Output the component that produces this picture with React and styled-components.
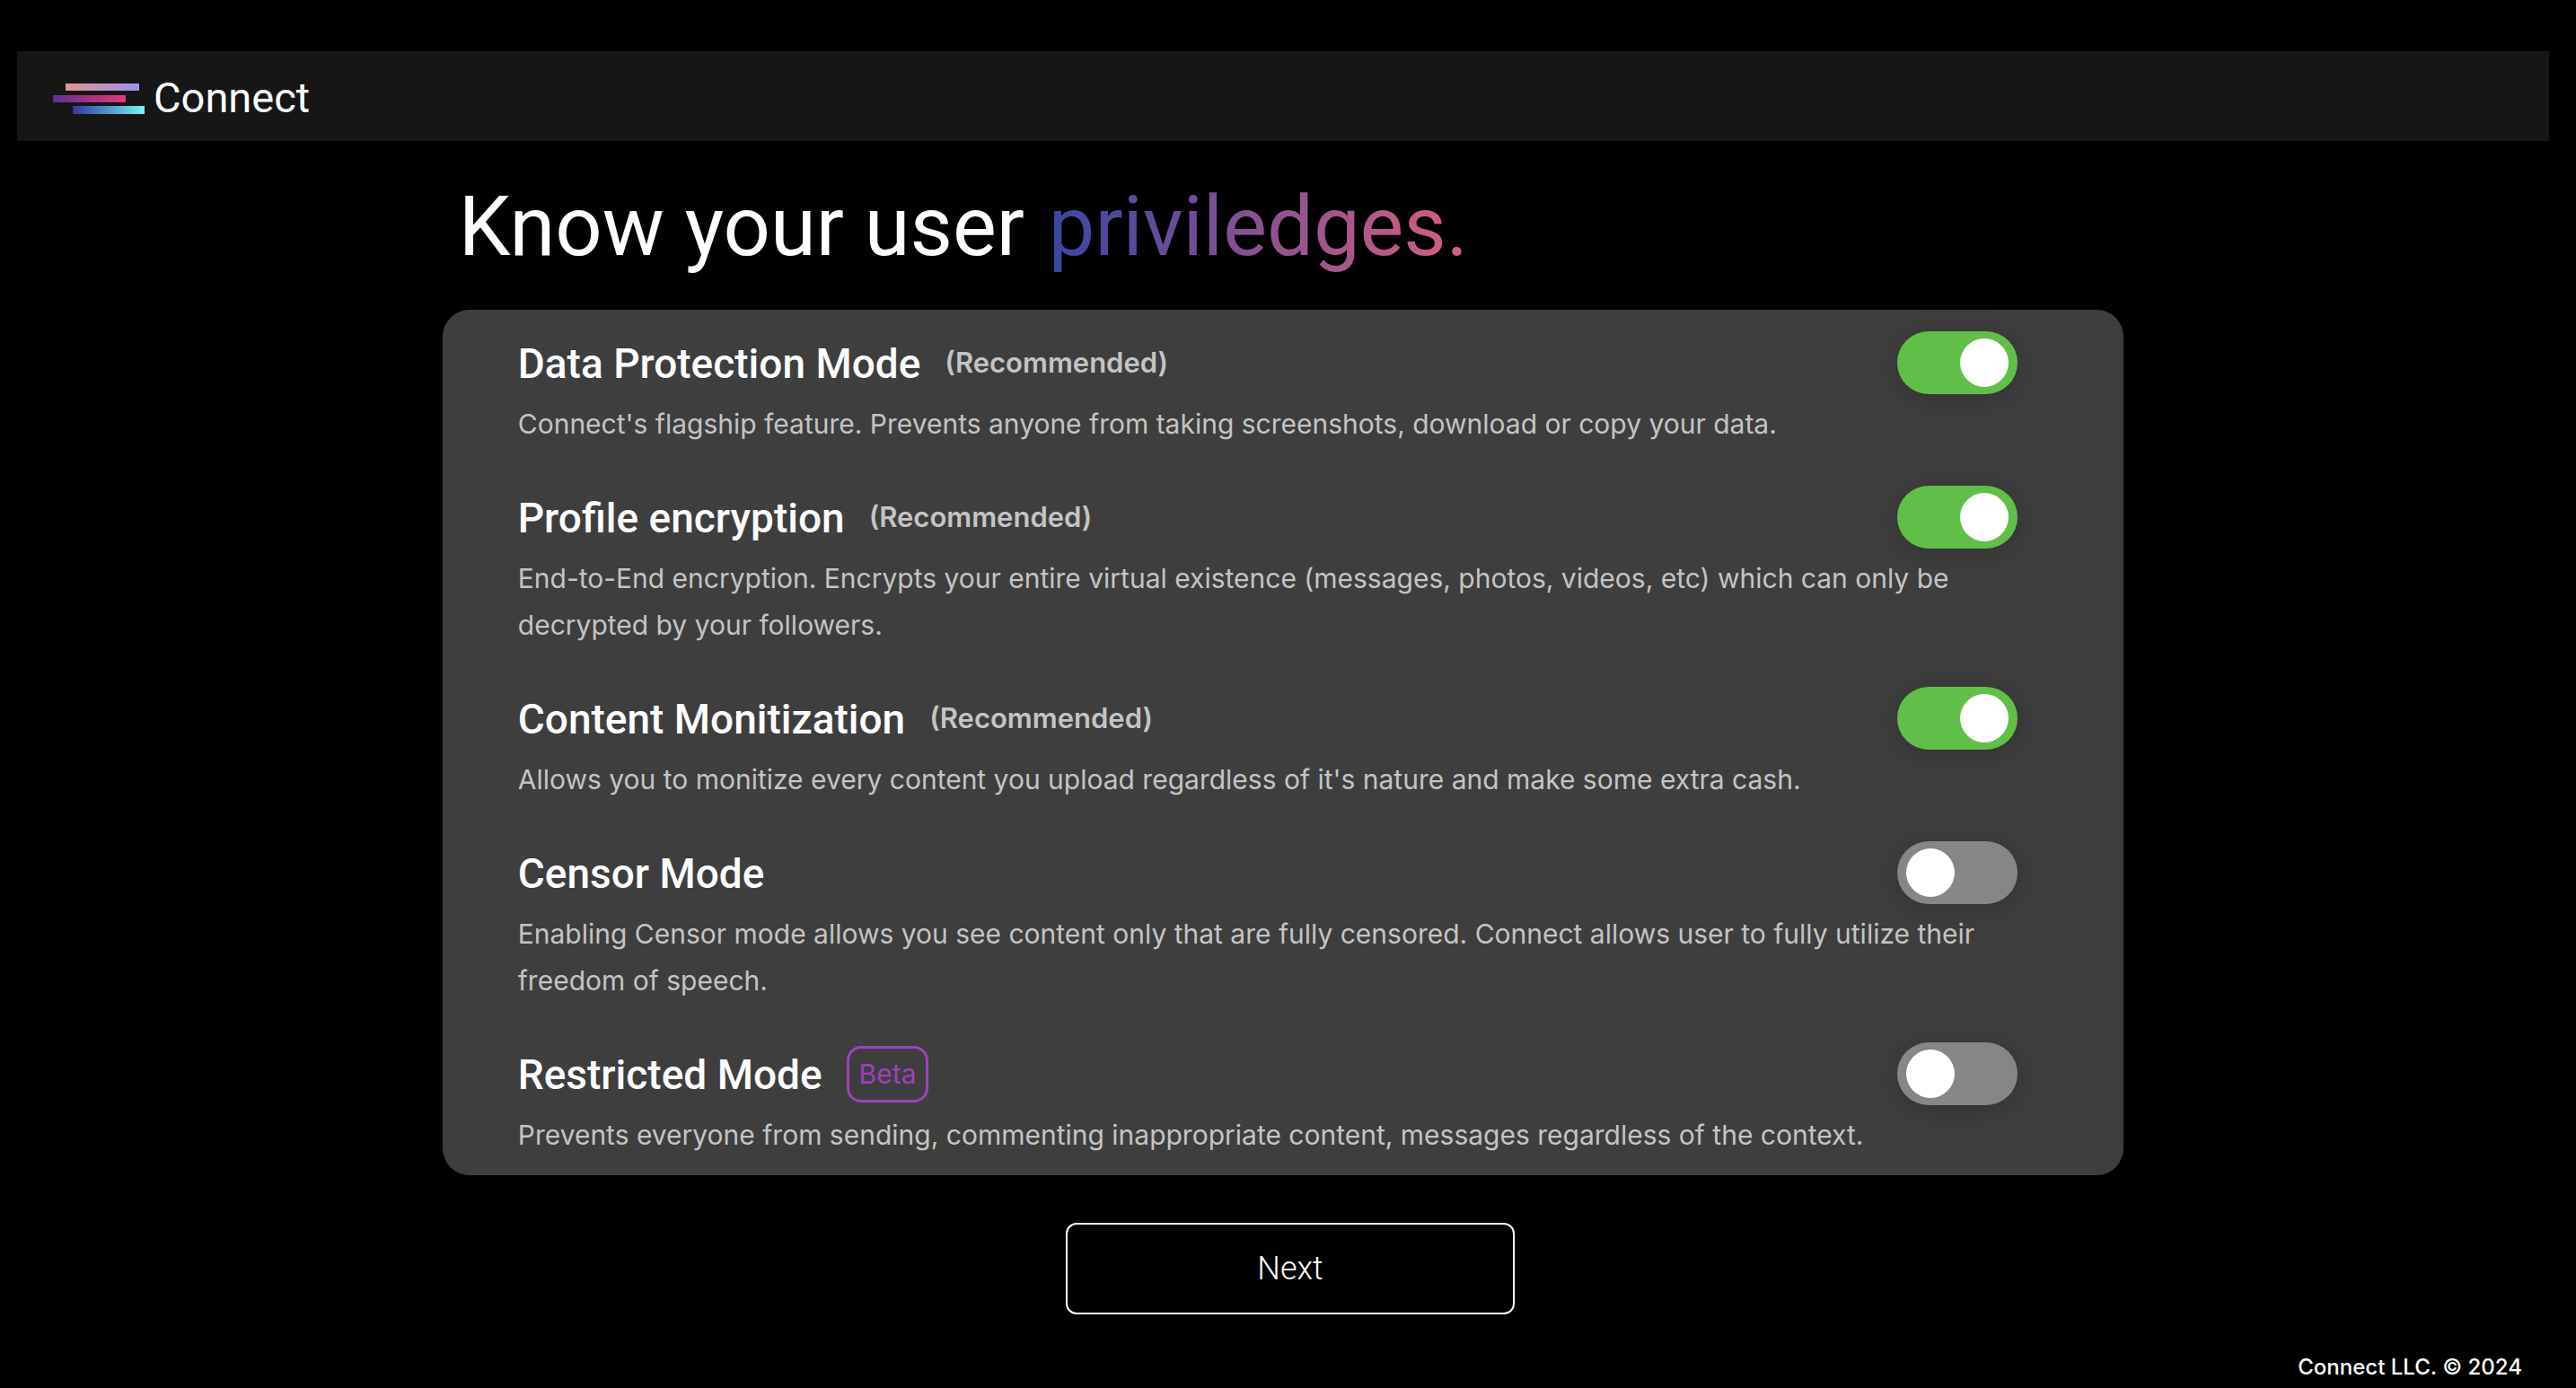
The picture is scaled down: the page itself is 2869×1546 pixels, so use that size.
import React, { useState } from 'react';
import styled, { createGlobalStyle } from 'styled-components';

const DISPLAY_FONT = 'Roboto, "Liberation Sans", sans-serif';
const TEXT_FONT = 'Inter, "Liberation Sans", sans-serif';

const GlobalStyle = createGlobalStyle`
  *, *::before, *::after { box-sizing: border-box; }
  body {
    margin: 0;
    background: #000;
    color: #fff;
    font-family: ${TEXT_FONT};
    -webkit-font-smoothing: antialiased;
  }
`;

const Page = styled.div`
  display: flex;
  flex-direction: column;
  min-height: 100vh;
  padding: 57px 30px 0 19px;
`;

const Header = styled.header`
  display: flex;
  align-items: center;
  height: 100px;
  padding: 0 40px;
  background: #161616;
`;

const Brand = styled.a`
  display: flex;
  align-items: center;
  gap: 10px;
  color: #fff;
  text-decoration: none;
`;

const BrandName = styled.span`
  padding-top: 4px;
  font-family: ${DISPLAY_FONT};
  font-size: 47px;
  line-height: 60px;
`;

const Logo = styled.svg`
  display: block;
  width: 102px;
  height: 40px;
`;

const Main = styled.main`
  display: flex;
  flex-direction: column;
  width: 66.4%;
  margin: 0 auto;
`;

const Title = styled.h1`
  margin: 0;
  padding: 34px 18px 30px;
  font-family: ${DISPLAY_FONT};
  font-size: 92px;
  font-weight: 400;
  line-height: 124px;
`;

const Highlight = styled.span`
  margin-left: 4px;
  background: linear-gradient(90deg, #3a45a3, #d75f80);
  background-clip: text;
  -webkit-background-clip: text;
  color: transparent;
`;

const Card = styled.section`
  display: flex;
  flex-direction: column;
  gap: 43px;
  padding: 24px 118px 19px 84px;
  border-radius: 30px;
  background: #3e3e3e;
`;

const Setting = styled.div`
  display: flex;
  flex-direction: column;
  gap: 7px;
`;

const SettingHead = styled.div`
  display: flex;
  align-items: center;
  gap: 27px;
  height: 70px;
`;

const SettingName = styled.label`
  padding-top: 2px;
  font-family: ${DISPLAY_FONT};
  font-size: 46px;
  font-weight: 500;
  line-height: 60px;
`;

const Recommended = styled.span`
  color: #c4c4c4;
  font-size: 31px;
  font-weight: 600;
  line-height: 40px;
`;

const Beta = styled.span`
  padding: 8px 11px;
  border: 3px solid #a040bf;
  border-radius: 16px;
  color: #a040bf;
  font-size: 30px;
  line-height: 41px;
`;

const Description = styled.p`
  margin: 0;
  color: #c4c4c4;
  font-size: 30px;
  line-height: 52px;
`;

const Toggle = styled.input`
  appearance: none;
  flex: none;
  display: flex;
  align-items: center;
  width: 134px;
  height: 70px;
  margin: 0 0 0 auto;
  padding: 0 10px;
  border-radius: 35px;
  background: #868686;
  box-shadow: 0 4px 30px rgba(0, 0, 0, 0.2);
  cursor: pointer;

  &::before {
    content: "";
    width: 54px;
    height: 54px;
    border-radius: 50%;
    background: #fff;
  }

  &:checked {
    justify-content: flex-end;
    background: #61bf49;
  }
`;

const Actions = styled.div`
  display: flex;
  justify-content: center;
  padding: 53px 0 0 16px;
`;

const Next = styled.button`
  width: 500px;
  height: 102px;
  border: 2px solid #fff;
  border-radius: 12px;
  background: #000;
  color: #fff;
  font-family: ${DISPLAY_FONT};
  font-size: 36px;
  font-weight: 300;
  cursor: pointer;
`;

const Footer = styled.footer`
  margin-top: auto;
  padding: 0 30px 7px;
  font-size: 24px;
  font-weight: 500;
  line-height: 32px;
  text-align: right;
`;

const SETTINGS = [
  {
    id: 'data-protection',
    name: 'Data Protection Mode',
    recommended: true,
    text: "Connect's flagship feature. Prevents anyone from taking screenshots, download or copy your data.",
  },
  {
    id: 'profile-encryption',
    name: 'Profile encryption',
    recommended: true,
    text: 'End-to-End encryption. Encrypts your entire virtual existence (messages, photos, videos, etc) which can only be decrypted by your followers.',
  },
  {
    id: 'content-monitization',
    name: 'Content Monitization',
    recommended: true,
    text: "Allows you to monitize every content you upload regardless of it's nature and make some extra cash.",
  },
  {
    id: 'censor-mode',
    name: 'Censor Mode',
    text: 'Enabling Censor mode allows you see content only that are fully censored. Connect allows user to fully utilize their freedom of speech.',
  },
  {
    id: 'restricted-mode',
    name: 'Restricted Mode',
    beta: true,
    text: 'Prevents everyone from sending, commenting inappropriate content, messages regardless of the context.',
  },
];

function ConnectLogo() {
  return (
    <Logo viewBox="0 0 102 40" aria-hidden="true">
      <defs>
        <linearGradient id="bar-top">
          <stop offset="0" stopColor="#e09490" />
          <stop offset="1" stopColor="#a091f5" />
        </linearGradient>
        <linearGradient id="bar-middle">
          <stop offset="0" stopColor="#63308c" />
          <stop offset="1" stopColor="#e03a78" />
        </linearGradient>
        <linearGradient id="bar-bottom">
          <stop offset="0" stopColor="#30389a" />
          <stop offset="1" stopColor="#74f5fb" />
        </linearGradient>
      </defs>
      <rect x="14" y="6" width="82" height="8" fill="url(#bar-top)" />
      <rect x="0" y="19" width="81" height="8" fill="url(#bar-middle)" />
      <rect x="22" y="31" width="80" height="9" fill="url(#bar-bottom)" />
    </Logo>
  );
}

function SettingRow({ id, name, recommended, beta, text, checked, onToggle }) {
  return (
    <Setting>
      <SettingHead>
        <SettingName htmlFor={id}>{name}</SettingName>
        {recommended && <Recommended>(Recommended)</Recommended>}
        {beta && <Beta>Beta</Beta>}
        <Toggle id={id} type="checkbox" checked={checked} onChange={onToggle} />
      </SettingHead>
      <Description>{text}</Description>
    </Setting>
  );
}

export default function App() {
  const [enabled, setEnabled] = useState(() =>
    Object.fromEntries(SETTINGS.map((s) => [s.id, Boolean(s.recommended)]))
  );
  const toggle = (id) => setEnabled((prev) => ({ ...prev, [id]: !prev[id] }));

  return (
    <>
      <GlobalStyle />
      <Page>
        <Header>
          <Brand href="#">
            <ConnectLogo />
            <BrandName>Connect</BrandName>
          </Brand>
        </Header>
        <Main>
          <Title>
            Know your user <Highlight>priviledges.</Highlight>
          </Title>
          <Card>
            {SETTINGS.map((s) => (
              <SettingRow key={s.id} {...s} checked={enabled[s.id]} onToggle={() => toggle(s.id)} />
            ))}
          </Card>
          <Actions>
            <Next type="button">Next</Next>
          </Actions>
        </Main>
        <Footer>Connect LLC. © 2024</Footer>
      </Page>
    </>
  );
}
